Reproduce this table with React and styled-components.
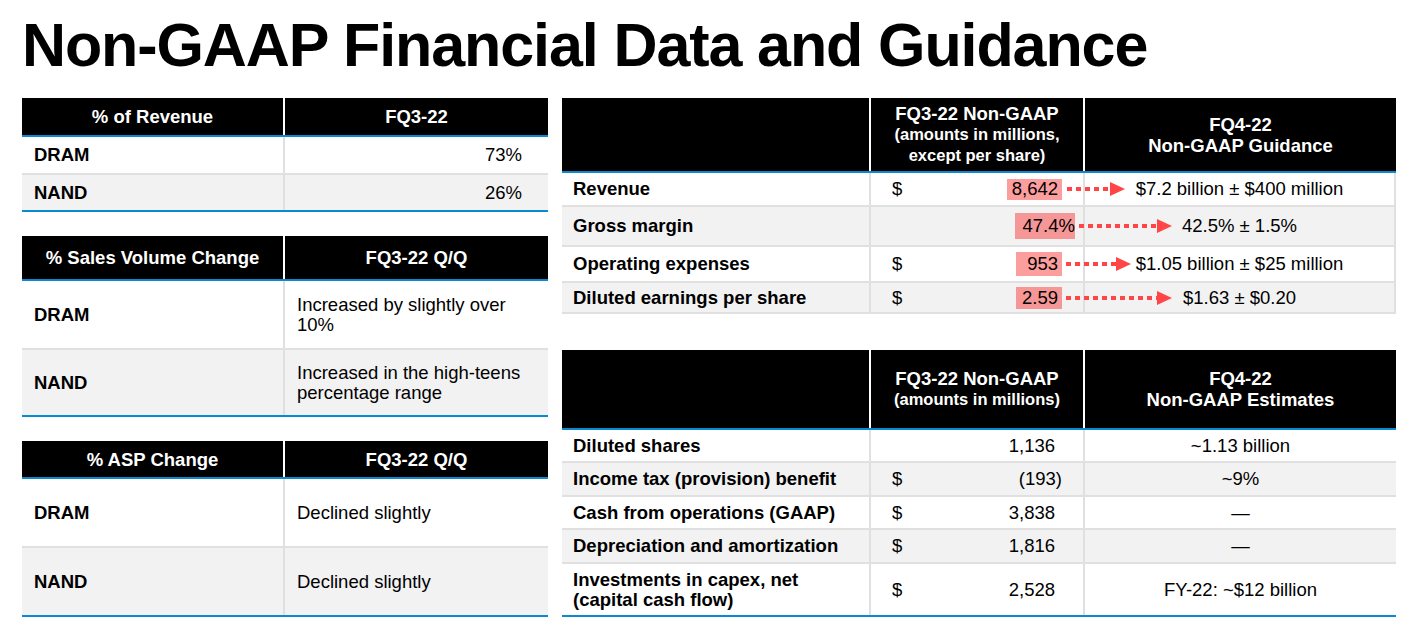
import React from 'react';
import styled, { createGlobalStyle } from 'styled-components';

const GlobalStyle = createGlobalStyle`
  html, body {
    margin: 0;
    padding: 0;
    background: #fff;
  }
  body {
    font-family: "Liberation Sans", Arial, sans-serif;
    color: #000;
  }
`;

const BLUE = '#0a8ad2';
const LINE = '#e0e0e0';

const Page = styled.div`
  width: 1409px;
  height: 635px;
  box-sizing: border-box;
  padding: 10px 0 0 22px;
  overflow: hidden;
`;

const Title = styled.h1`
  margin: 0;
  font-size: 61px;
  line-height: 70px;
  font-weight: 700;
  letter-spacing: -1.1px;
`;

const Columns = styled.div`
  display: flex;
  align-items: flex-start;
  gap: 14px;
  margin-top: 18px;
`;

const Stack = styled.div`
  display: flex;
  flex-direction: column;
  gap: ${p => p.$gap}px;
  width: ${p => p.$w}px;
`;

const Table = styled.div`
  display: flex;
  flex-direction: column;
  border-bottom: 2px solid ${p => (p.$soft ? LINE : BLUE)};
`;

const HeadRow = styled.div`
  display: grid;
  grid-template-columns: ${p => p.$cols};
  height: ${p => p.$h}px;
  background: #000;
  border-bottom: 2px solid ${BLUE};
`;

const HeadCell = styled.div`
  display: flex;
  flex-direction: column;
  align-items: center;
  justify-content: center;
  color: #fff;
  font-weight: 700;
  text-align: center;
  border-right: 2px solid #fff;
  &:last-child {
    border-right: none;
  }
`;

const HeadLine = styled.div`
  font-size: ${p => (p.$small ? 16.5 : 18.5)}px;
  line-height: 21px;
`;

const Row = styled.div`
  position: relative;
  display: grid;
  grid-template-columns: ${p => p.$cols};
  height: ${p => p.$h}px;
  background: ${p => (p.$alt ? '#f2f2f2' : '#fff')};
  & + & {
    border-top: 2px solid ${LINE};
  }
`;

const Cell = styled.div`
  display: flex;
  align-items: center;
  justify-content: ${p =>
    p.$align === 'right' ? 'flex-end' : p.$align === 'center' ? 'center' : 'flex-start'};
  padding: 0 ${p => p.$pr ?? 12}px 0 ${p => p.$pl ?? 12}px;
  font-size: 18.5px;
  line-height: 20px;
  font-weight: ${p => (p.$bold ? 700 : 400)};
  text-align: ${p => p.$align || 'left'};
  border-right: 2px solid ${LINE};
  &:last-child {
    border-right: none;
  }
`;

const MoneyCell = styled(Cell)`
  justify-content: space-between;
  padding: 0 21px;
`;

const Value = styled.span`
  margin-left: auto;
  margin-right: ${p => p.$shift || 0}px;
`;

const Mark = styled.span`
  margin-left: auto;
  margin-right: ${p => p.$shift || 0}px;
  display: inline-flex;
  align-items: center;
  justify-content: flex-end;
  box-sizing: border-box;
  width: ${p => p.$w}px;
  height: ${p => p.$h}px;
  padding-right: ${p => p.$pr ?? 4}px;
  background: rgba(250, 40, 40, 0.45);
`;

const ArrowBox = styled.svg`
  position: absolute;
  top: 50%;
  left: ${p => p.$left}px;
  transform: translateY(-50%);
  overflow: visible;
`;

const Arrow = ({ left, width }) => (
  <ArrowBox $left={left} width={width} height="16" viewBox={`0 0 ${width} 16`}>
    <line
      x1="0"
      y1="8"
      x2={width - 14}
      y2="8"
      stroke="#ff4545"
      strokeWidth="4"
      strokeDasharray="5 4"
    />
    <polygon points={`${width - 15},1 ${width},8 ${width - 15},15`} fill="#ff4545" />
  </ArrowBox>
);

const LEFT_COLS = '263px 1fr';
const RIGHT_COLS = '309px 214px 1fr';

const Dollar = () => <span>$</span>;

export default function App() {
  return (
    <Page>
      <GlobalStyle />
      <Title>Non-GAAP Financial Data and Guidance</Title>
      <Columns>
        <Stack $w={526} $gap={24}>
          <Table>
            <HeadRow $cols={LEFT_COLS} $h={37}>
              <HeadCell><HeadLine>% of Revenue</HeadLine></HeadCell>
              <HeadCell><HeadLine>FQ3-22</HeadLine></HeadCell>
            </HeadRow>
            <Row $cols={LEFT_COLS} $h={36}>
              <Cell $bold>DRAM</Cell>
              <Cell $align="right" $pr={26}>73%</Cell>
            </Row>
            <Row $cols={LEFT_COLS} $h={35} $alt>
              <Cell $bold>NAND</Cell>
              <Cell $align="right" $pr={26}>26%</Cell>
            </Row>
          </Table>

          <Table>
            <HeadRow $cols={LEFT_COLS} $h={43}>
              <HeadCell><HeadLine>% Sales Volume Change</HeadLine></HeadCell>
              <HeadCell><HeadLine>FQ3-22 Q/Q</HeadLine></HeadCell>
            </HeadRow>
            <Row $cols={LEFT_COLS} $h={67}>
              <Cell $bold>DRAM</Cell>
              <Cell>Increased by slightly over<br />10%</Cell>
            </Row>
            <Row $cols={LEFT_COLS} $h={65} $alt>
              <Cell $bold>NAND</Cell>
              <Cell>Increased in the high-teens<br />percentage range</Cell>
            </Row>
          </Table>

          <Table>
            <HeadRow $cols={LEFT_COLS} $h={36}>
              <HeadCell><HeadLine>% ASP Change</HeadLine></HeadCell>
              <HeadCell><HeadLine>FQ3-22 Q/Q</HeadLine></HeadCell>
            </HeadRow>
            <Row $cols={LEFT_COLS} $h={67}>
              <Cell $bold>DRAM</Cell>
              <Cell>Declined slightly</Cell>
            </Row>
            <Row $cols={LEFT_COLS} $h={67} $alt>
              <Cell $bold>NAND</Cell>
              <Cell>Declined slightly</Cell>
            </Row>
          </Table>
        </Stack>

        <Stack $w={834} $gap={36}>
          <Table $soft>
            <HeadRow $cols={RIGHT_COLS} $h={73}>
              <HeadCell />
              <HeadCell>
                <HeadLine>FQ3-22 Non-GAAP</HeadLine>
                <HeadLine $small>(amounts in millions,</HeadLine>
                <HeadLine $small>except per share)</HeadLine>
              </HeadCell>
              <HeadCell>
                <HeadLine>FQ4-22</HeadLine>
                <HeadLine>Non-GAAP Guidance</HeadLine>
              </HeadCell>
            </HeadRow>
            <Row $cols={RIGHT_COLS} $h={32}>
              <Cell $bold $pl={11}>Revenue</Cell>
              <MoneyCell><Dollar /><Mark $w={55} $h={21}>8,642</Mark></MoneyCell>
              <Cell $align="center">$7.2 billion ± $400 million</Cell>
              <Arrow left={505} width={58} />
            </Row>
            <Row $cols={RIGHT_COLS} $h={38} $alt>
              <Cell $bold $pl={11}>Gross margin</Cell>
              <MoneyCell><Mark $w={60} $h={26} $pr={0} $shift={-13}>47.4%</Mark></MoneyCell>
              <Cell $align="center">42.5% ± 1.5%</Cell>
              <Arrow left={517} width={93} />
            </Row>
            <Row $cols={RIGHT_COLS} $h={34}>
              <Cell $bold $pl={11}>Operating expenses</Cell>
              <MoneyCell><Dollar /><Mark $w={46} $h={24}>953</Mark></MoneyCell>
              <Cell $align="center">$1.05 billion ± $25 million</Cell>
              <Arrow left={504} width={65} />
            </Row>
            <Row $cols={RIGHT_COLS} $h={29} $alt>
              <Cell $bold $pl={11}>Diluted earnings per share</Cell>
              <MoneyCell><Dollar /><Mark $w={46} $h={22}>2.59</Mark></MoneyCell>
              <Cell $align="center">$1.63 ± $0.20</Cell>
              <Arrow left={504} width={106} />
            </Row>
          </Table>

          <Table>
            <HeadRow $cols={RIGHT_COLS} $h={78}>
              <HeadCell />
              <HeadCell>
                <HeadLine>FQ3-22 Non-GAAP</HeadLine>
                <HeadLine $small>(amounts in millions)</HeadLine>
              </HeadCell>
              <HeadCell>
                <HeadLine>FQ4-22</HeadLine>
                <HeadLine>Non-GAAP Estimates</HeadLine>
              </HeadCell>
            </HeadRow>
            <Row $cols={RIGHT_COLS} $h={31}>
              <Cell $bold $pl={11}>Diluted shares</Cell>
              <MoneyCell><Value $shift={7}>1,136</Value></MoneyCell>
              <Cell $align="center">~1.13 billion</Cell>
            </Row>
            <Row $cols={RIGHT_COLS} $h={32} $alt>
              <Cell $bold $pl={11}>Income tax (provision) benefit</Cell>
              <MoneyCell><Dollar /><Value>(193)</Value></MoneyCell>
              <Cell $align="center">~9%</Cell>
            </Row>
            <Row $cols={RIGHT_COLS} $h={31}>
              <Cell $bold $pl={11}>Cash from operations (GAAP)</Cell>
              <MoneyCell><Dollar /><Value $shift={7}>3,838</Value></MoneyCell>
              <Cell $align="center">—</Cell>
            </Row>
            <Row $cols={RIGHT_COLS} $h={32} $alt>
              <Cell $bold $pl={11}>Depreciation and amortization</Cell>
              <MoneyCell><Dollar /><Value $shift={7}>1,816</Value></MoneyCell>
              <Cell $align="center">—</Cell>
            </Row>
            <Row $cols={RIGHT_COLS} $h={51}>
              <Cell $bold $pl={11}>Investments in capex, net<br />(capital cash flow)</Cell>
              <MoneyCell><Dollar /><Value $shift={7}>2,528</Value></MoneyCell>
              <Cell $align="center">FY-22: ~$12 billion</Cell>
            </Row>
          </Table>
        </Stack>
      </Columns>
    </Page>
  );
}
